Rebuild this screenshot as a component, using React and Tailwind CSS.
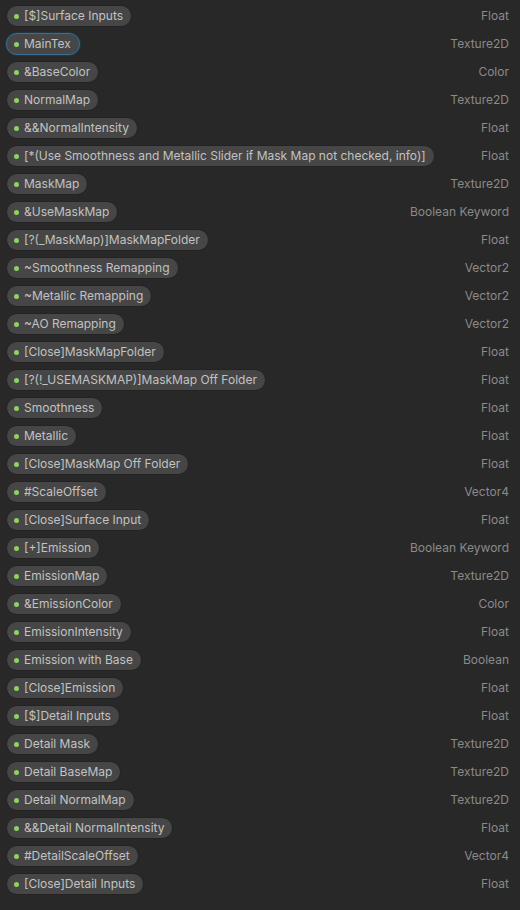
const ROWS = [
  ['[$]Surface Inputs', 'Float'],
  ['MainTex', 'Texture2D', true],
  ['&BaseColor', 'Color'],
  ['NormalMap', 'Texture2D'],
  ['&&NormalIntensity', 'Float'],
  ['[*(Use Smoothness and Metallic Slider if Mask Map not checked, info)]', 'Float'],
  ['MaskMap', 'Texture2D'],
  ['&UseMaskMap', 'Boolean Keyword'],
  ['[?(_MaskMap)]MaskMapFolder', 'Float'],
  ['~Smoothness Remapping', 'Vector2'],
  ['~Metallic Remapping', 'Vector2'],
  ['~AO Remapping', 'Vector2'],
  ['[Close]MaskMapFolder', 'Float'],
  ['[?(!_USEMASKMAP)]MaskMap Off Folder', 'Float'],
  ['Smoothness', 'Float'],
  ['Metallic', 'Float'],
  ['[Close]MaskMap Off Folder', 'Float'],
  ['#ScaleOffset', 'Vector4'],
  ['[Close]Surface Input', 'Float'],
  ['[+]Emission', 'Boolean Keyword'],
  ['EmissionMap', 'Texture2D'],
  ['&EmissionColor', 'Color'],
  ['EmissionIntensity', 'Float'],
  ['Emission with Base', 'Boolean'],
  ['[Close]Emission', 'Float'],
  ['[$]Detail Inputs', 'Float'],
  ['Detail Mask', 'Texture2D'],
  ['Detail BaseMap', 'Texture2D'],
  ['Detail NormalMap', 'Texture2D'],
  ['&&Detail NormalIntensity', 'Float'],
  ['#DetailScaleOffset', 'Vector4'],
  ['[Close]Detail Inputs', 'Float'],
];

function Pill({ name, selected }) {
  return (
    <div
      className={`flex items-center h-[22px] rounded-full bg-[#464646] pl-[7px] pr-[8px] border ${
        selected ? 'border-[#3a6f92] shadow-[0_0_0_1px_#1f3848]' : 'border-[#232323]'
      }`}
    >
      <span className="w-[5px] h-[5px] rounded-full bg-[#8ed35f] mr-[5px]" />
      <span className="text-[12px] text-[#c2c2c2] whitespace-nowrap leading-none">{name}</span>
    </div>
  );
}

export default function App() {
  return (
    <div
      className="w-[520px] h-[910px] bg-[#282828] pt-[2px] overflow-hidden"
      style={{ fontFamily: 'Inter, "Noto Sans", sans-serif' }}
    >
      {ROWS.map(([name, type, sel]) => (
        <div key={name} className="flex items-center justify-between h-[28px] pl-[6px] pr-[11px]">
          <Pill name={name} selected={sel} />
          <span className="text-[12px] text-[#8a8a8a] whitespace-nowrap">{type}</span>
        </div>
      ))}
    </div>
  );
}
